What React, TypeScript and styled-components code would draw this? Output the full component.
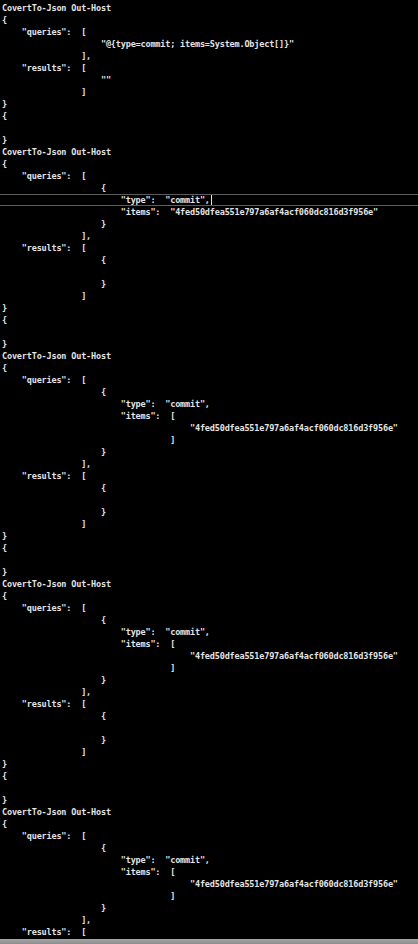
import React from "react";
import styled, { createGlobalStyle } from "styled-components";

const Global = createGlobalStyle`
  html, body { margin: 0; padding: 0; background: #000; }
  body { overflow: hidden; }
`;

const Screen = styled.div`
  width: 418px;
  height: 944px;
  display: flex;
  flex-direction: column;
  background: #000;
  overflow: hidden;
`;

const Console = styled.div`
  flex: 1;
  min-height: 0;
  overflow: hidden;
  padding-top: 1.5px;
  display: flex;
  flex-direction: column;
`;

const Line = styled.div<{ $active?: boolean }>`
  flex: none;
  height: 12px;
  line-height: 12px;
  padding-left: 2px;
  white-space: pre;
  font-family: "DejaVu Sans Mono", "Liberation Mono", monospace;
  font-weight: bold;
  font-size: 8.5px;
  letter-spacing: -0.17px;
  color: #e4e4e4;
  box-shadow: ${(p) =>
    p.$active ? "inset 0 1px 0 #5c5c5c, inset 0 -1px 0 #5c5c5c" : "none"};
`;

const Caret = styled.span`
  display: inline-block;
  width: 1px;
  height: 10px;
  margin-left: 1px;
  vertical-align: -2px;
  background: #e4e4e4;
`;

const ScrollBar = styled.div`
  flex: none;
  height: 5px;
  background: linear-gradient(#a6a6a6, #8c8c8c);
`;

const HASH = '"4fed50dfea551e797a6af4acf060dc816d3f956e"';
const sp = (n: number) => " ".repeat(n);

type L = { text: string; active?: boolean; caret?: boolean };

const header: L[] = [
  { text: "CovertTo-Json Out-Host" },
  { text: "{" },
  { text: sp(4) + '"queries":  [' },
];

const tail: L[] = [
  { text: sp(16) + "]," },
  { text: sp(4) + '"results":  [' },
  { text: sp(20) + "{" },
  { text: "" },
  { text: sp(20) + "}" },
  { text: sp(16) + "]" },
  { text: "}" },
  { text: "{" },
  { text: "" },
  { text: "}" },
];

const block1: L[] = [
  ...header,
  { text: sp(20) + '"@{type=commit; items=System.Object[]}"' },
  { text: sp(16) + "]," },
  { text: sp(4) + '"results":  [' },
  { text: sp(20) + '""' },
  { text: sp(16) + "]" },
  { text: "}" },
  { text: "{" },
  { text: "" },
  { text: "}" },
];

const block2: L[] = [
  ...header,
  { text: sp(20) + "{" },
  { text: sp(24) + '"type":  "commit",', active: true, caret: true },
  { text: sp(24) + '"items":  ' + HASH },
  { text: sp(20) + "}" },
  ...tail,
];

const arrayBlock: L[] = [
  ...header,
  { text: sp(20) + "{" },
  { text: sp(24) + '"type":  "commit",' },
  { text: sp(24) + '"items":  [' },
  { text: sp(38) + HASH },
  { text: sp(34) + "]" },
  { text: sp(20) + "}" },
  ...tail,
];

// The last block is only visible up to its "results" line.
const lines: L[] = [
  ...block1,
  ...block2,
  ...arrayBlock,
  ...arrayBlock,
  ...arrayBlock.slice(0, 11),
];

export default function App() {
  return (
    <>
      <Global />
      <Screen>
        <Console>
          {lines.map((l, i) => (
            <Line key={i} $active={l.active}>
              {l.text}
              {l.caret && <Caret />}
            </Line>
          ))}
        </Console>
        <ScrollBar />
      </Screen>
    </>
  );
}
